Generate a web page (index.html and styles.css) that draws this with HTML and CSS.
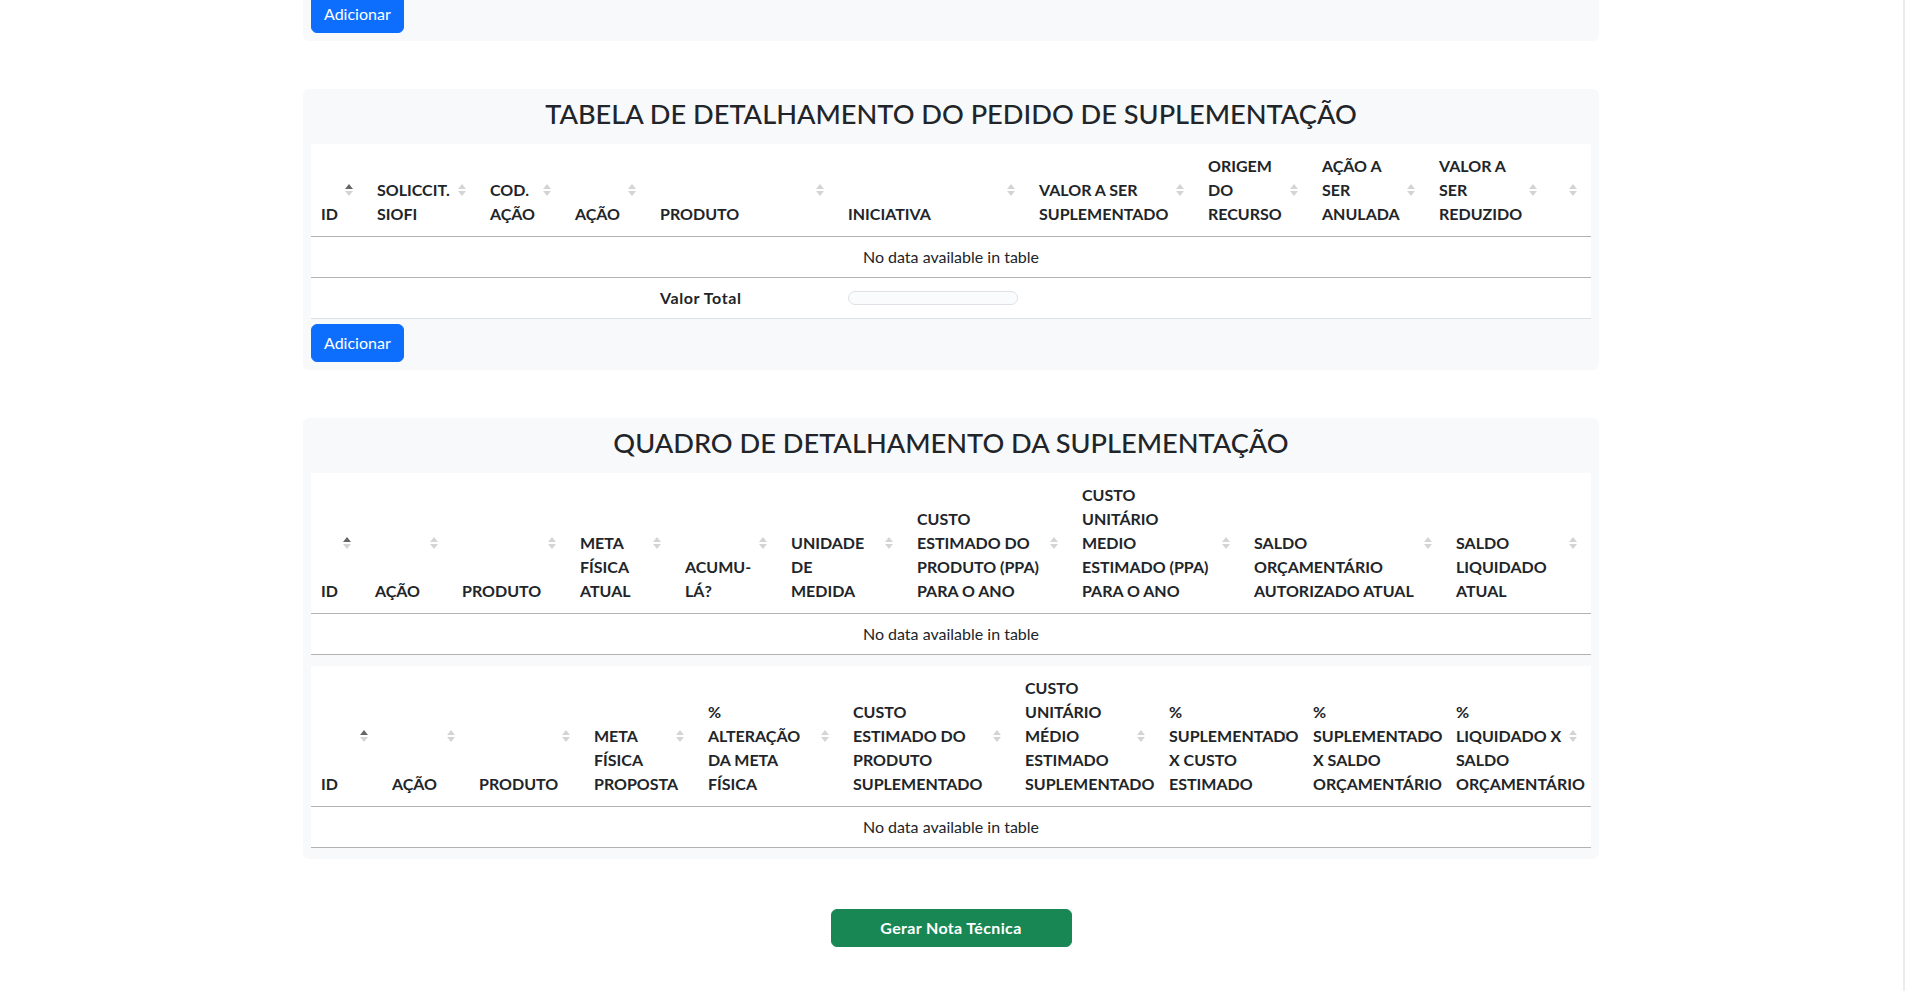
FILE: index.html
```html
<!DOCTYPE html>
<html lang="pt-BR">
<head>
<meta charset="utf-8">
<title>Detalhamento da Suplementação</title>
<link rel="stylesheet" href="styles.css">
</head>
<body>
<main class="container">
  <section class="panel panel-top">
    <button class="btn btn-primary" type="button">Adicionar</button>
  </section>

  <section class="panel panel-pedido">
    <h3 class="panel-title">TABELA DE DETALHAMENTO DO PEDIDO DE SUPLEMENTAÇÃO</h3>
    <table class="dt dt-pedido">
      <colgroup><col><col><col><col><col><col><col><col><col><col><col></colgroup>
      <thead>
        <tr>
          <th class="sort asc">ID</th>
          <th class="sort">SOLICCIT.<br>SIOFI</th>
          <th class="sort">COD.<br>AÇÃO</th>
          <th class="sort">AÇÃO</th>
          <th class="sort">PRODUTO</th>
          <th class="sort">INICIATIVA</th>
          <th class="sort">VALOR A SER<br>SUPLEMENTADO</th>
          <th class="sort">ORIGEM<br>DO<br>RECURSO</th>
          <th class="sort">AÇÃO A<br>SER<br>ANULADA</th>
          <th class="sort">VALOR A<br>SER<br>REDUZIDO</th>
          <th class="sort"></th>
        </tr>
      </thead>
      <tbody>
        <tr><td class="empty" colspan="11">No data available in table</td></tr>
      </tbody>
      <tfoot>
        <tr>
          <td colspan="4"></td>
          <td class="total-label">Valor Total</td>
          <td><span class="total-input"></span></td>
          <td colspan="5"></td>
        </tr>
      </tfoot>
    </table>
    <button class="btn btn-primary" type="button">Adicionar</button>
  </section>

  <section class="panel panel-quadro">
    <h3 class="panel-title">QUADRO DE DETALHAMENTO DA SUPLEMENTAÇÃO</h3>
    <table class="dt dt-atual">
      <colgroup><col><col><col><col><col><col><col><col><col><col></colgroup>
      <thead>
        <tr>
          <th class="sort asc">ID</th>
          <th class="sort">AÇÃO</th>
          <th class="sort">PRODUTO</th>
          <th class="sort">META<br>FÍSICA<br>ATUAL</th>
          <th class="sort">ACUMU-<br>LÁ?</th>
          <th class="sort">UNIDADE<br>DE<br>MEDIDA</th>
          <th class="sort">CUSTO<br>ESTIMADO DO<br>PRODUTO (PPA)<br>PARA O ANO</th>
          <th class="sort">CUSTO<br>UNITÁRIO<br>MEDIO<br>ESTIMADO (PPA)<br>PARA O ANO</th>
          <th class="sort">SALDO<br>ORÇAMENTÁRIO<br>AUTORIZADO ATUAL</th>
          <th class="sort">SALDO<br>LIQUIDADO<br>ATUAL</th>
        </tr>
      </thead>
      <tbody>
        <tr><td class="empty" colspan="10">No data available in table</td></tr>
      </tbody>
    </table>

    <table class="dt dt-proposta">
      <colgroup><col><col><col><col><col><col><col><col><col><col></colgroup>
      <thead>
        <tr>
          <th class="sort asc">ID</th>
          <th class="sort">AÇÃO</th>
          <th class="sort">PRODUTO</th>
          <th class="sort">META<br>FÍSICA<br>PROPOSTA</th>
          <th class="sort">%<br>ALTERAÇÃO<br>DA META<br>FÍSICA</th>
          <th class="sort">CUSTO<br>ESTIMADO DO<br>PRODUTO<br>SUPLEMENTADO</th>
          <th class="sort">CUSTO<br>UNITÁRIO<br>MÉDIO<br>ESTIMADO<br>SUPLEMENTADO</th>
          <th class="sort">%<br>SUPLEMENTADO<br>X CUSTO<br>ESTIMADO</th>
          <th class="sort">%<br>SUPLEMENTADO<br>X SALDO<br>ORÇAMENTÁRIO</th>
          <th class="sort">%<br>LIQUIDADO X<br>SALDO<br>ORÇAMENTÁRIO</th>
        </tr>
      </thead>
      <tbody>
        <tr><td class="empty" colspan="10">No data available in table</td></tr>
      </tbody>
    </table>
  </section>

  <div class="actions">
    <button class="btn btn-success" type="button">Gerar Nota Técnica</button>
  </div>
</main>
</body>
</html>
```

FILE: styles.css
```css
* {
  box-sizing: border-box;
}

html {
  overflow: hidden;
}

body {
  margin: 0;
  min-height: 100vh;
  padding-right: 1px;
  border-right: 2px solid #ececec;
  font-family: Lato, "Liberation Sans", sans-serif;
  font-size: 16px;
  line-height: 1.5;
  color: #212529;
  background: #fff;
}

.container {
  width: 1296px;
  margin: 0 auto;
}

.panel {
  background: #f8f9fa;
  border-radius: 6px;
  padding: 8px;
  margin-bottom: 48px;
}

.panel-top {
  margin-top: -13px;
}

.panel-quadro {
  padding-bottom: 11px;
  margin-bottom: 0;
}

.panel-title {
  margin: 0 0 13.5px;
  font-size: 27.2px;
  font-weight: 500;
  line-height: 33.6px;
  text-align: center;
  color: #212529;
}

.btn {
  display: inline-block;
  font-family: inherit;
  font-size: 16px;
  font-weight: 400;
  line-height: 1.5;
  padding: 6px 12px;
  border: 1px solid transparent;
  border-radius: 6px;
  color: #fff;
  cursor: pointer;
}

.btn-primary {
  background: #0d6efd;
  border-color: #0d6efd;
}

.btn-success {
  background: #198754;
  border-color: #198754;
  font-weight: 700;
  letter-spacing: 0.35px;
  width: 241px;
}

.actions {
  display: flex;
  justify-content: center;
  margin-top: 50px;
}

/* tables */
.dt {
  width: 100%;
  table-layout: fixed;
  border-collapse: separate;
  border-spacing: 0;
  background: #fff;
}

.dt-pedido {
  margin-bottom: 5px;
}

.dt-atual {
  margin-bottom: 11px;
}

.dt th {
  position: relative;
  text-align: left;
  vertical-align: bottom;
  font-weight: 700;
  white-space: nowrap;
  padding: 10px 30px 10px 10px;
  border-bottom: 1px solid rgba(0, 0, 0, 0.3);
}

.dt td {
  padding: 8px 10px;
}

.dt td.empty {
  text-align: center;
  border-bottom: 1px solid rgba(0, 0, 0, 0.3);
}

.dt tfoot td {
  border-bottom: 1px solid #dee2e6;
  vertical-align: middle;
}

.total-label {
  font-weight: 700;
  letter-spacing: 0.6px;
}

.total-input {
  display: block;
  width: 170px;
  height: 14px;
  border: 1px solid #dee2e6;
  border-radius: 7px;
  background: #fafbfc;
}

/* sort indicators */
.dt th.sort::before,
.dt th.sort::after {
  content: "";
  position: absolute;
  right: 14px;
  width: 0;
  height: 0;
  border-left: 4px solid transparent;
  border-right: 4px solid transparent;
  opacity: 0.17;
}

.dt th.sort::before {
  bottom: calc(50% + 1px);
  border-bottom: 5px solid #000;
}

.dt th.sort::after {
  top: calc(50% + 1px);
  border-top: 5px solid #000;
}

.dt th.asc::before {
  opacity: 0.6;
}

/* column widths */
.dt-pedido col:nth-child(1) { width: 56px; }
.dt-pedido col:nth-child(2) { width: 113px; }
.dt-pedido col:nth-child(3) { width: 85px; }
.dt-pedido col:nth-child(4) { width: 85px; }
.dt-pedido col:nth-child(5) { width: 188px; }
.dt-pedido col:nth-child(6) { width: 191px; }
.dt-pedido col:nth-child(7) { width: 169px; }
.dt-pedido col:nth-child(8) { width: 114px; }
.dt-pedido col:nth-child(9) { width: 117px; }
.dt-pedido col:nth-child(10) { width: 122px; }
.dt-pedido col:nth-child(11) { width: 40px; }

.dt-atual col:nth-child(1) { width: 54px; }
.dt-atual col:nth-child(2) { width: 87px; }
.dt-atual col:nth-child(3) { width: 118px; }
.dt-atual col:nth-child(4) { width: 105px; }
.dt-atual col:nth-child(5) { width: 106px; }
.dt-atual col:nth-child(6) { width: 126px; }
.dt-atual col:nth-child(7) { width: 165px; }
.dt-atual col:nth-child(8) { width: 172px; }
.dt-atual col:nth-child(9) { width: 202px; }
.dt-atual col:nth-child(10) { width: 145px; }

.dt-proposta col:nth-child(1) { width: 71px; }
.dt-proposta col:nth-child(2) { width: 87px; }
.dt-proposta col:nth-child(3) { width: 115px; }
.dt-proposta col:nth-child(4) { width: 114px; }
.dt-proposta col:nth-child(5) { width: 145px; }
.dt-proposta col:nth-child(6) { width: 172px; }
.dt-proposta col:nth-child(7) { width: 144px; }
.dt-proposta col:nth-child(8) { width: 144px; }
.dt-proposta col:nth-child(9) { width: 143px; }
.dt-proposta col:nth-child(10) { width: 145px; }
```
